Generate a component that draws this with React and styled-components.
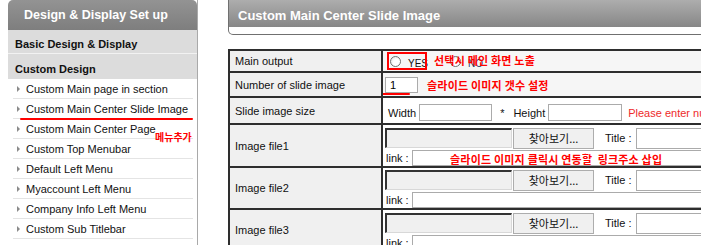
import React from 'react';
import styled, { createGlobalStyle } from 'styled-components';

const Global = createGlobalStyle`
  html, body { margin: 0; padding: 0; overflow: hidden; background: #fff; }
  body { font-family: "Liberation Sans", Arial, sans-serif; font-size: 11px; color: #111; }
`;

const KR = `"Noto Sans CJK KR", "Liberation Sans", sans-serif`;

const Page = styled.div`
  display: flex;
  align-items: flex-start;
  padding-left: 8px;
  width: 1000px;
`;

/* ---------- Sidebar ---------- */
const Sidebar = styled.aside`
  position: relative;
  flex: none;
  width: 190px;
  min-height: 260px;
  box-sizing: border-box;
  border-right: 1px solid #a9a9a9;
`;

const SideHeader = styled.div`
  height: 30px;
  box-sizing: border-box;
  padding-left: 16px;
  display: flex;
  align-items: center;
  border-radius: 5px 5px 0 0;
  background: linear-gradient(#939393, #7e7e7e);
  color: #fff;
  font-weight: bold;
  font-size: 12.5px;
`;

const Section = styled.div`
  height: ${p => p.$h}px;
  box-sizing: border-box;
  padding: 5px 0 0 7px;
  display: flex;
  align-items: center;
  background: #dcdcdc;
  font-weight: bold;
  font-size: 11px;
  color: #111;
  border-bottom: ${p => (p.$line ? '1px solid #f2f2f2' : 'none')};
`;

const Menu = styled.ul`
  list-style: none;
  margin: 0 4px 0 5px;
  padding: 0;
`;

const Item = styled.li`
  position: relative;
  height: 20px;
  box-sizing: border-box;
  border-bottom: 1px solid #e4e4e4;
  display: flex;
  align-items: center;
  padding-left: 4px;
  gap: 6px;
  font-size: 11px;
  color: #111;
  &::after {
    content: '';
    display: ${p => (p.$marked ? 'block' : 'none')};
    position: absolute;
    left: 7px;
    right: 0;
    bottom: -2px;
    height: 2px;
    border-radius: 1px;
    background: #f00;
  }
`;

const Arrow = styled.span`
  width: 0;
  height: 0;
  border-top: 3px solid transparent;
  border-bottom: 3px solid transparent;
  border-left: 3px solid #8a8a8a;
`;

const MenuNote = styled.span`
  position: absolute;
  left: 147px;
  top: 129px;
  color: #f00;
  font: bold 10px/16px ${KR};
`;

/* ---------- Main ---------- */
const Main = styled.main`
  flex: none;
  width: 640px;
  margin-left: 30px;
`;

const TitleBox = styled.div`
  box-sizing: border-box;
  height: 35px;
  border: 1px solid #707070;
  border-top: none;
  border-radius: 0 0 5px 5px;
  background: #fff;
  overflow: hidden;
`;

const TitleBar = styled.h1`
  margin: 0;
  height: 27px;
  box-sizing: border-box;
  padding: 3px 0 0 9px;
  display: flex;
  align-items: center;
  background: linear-gradient(#adadad, #878787);
  color: #fff;
  font: bold 13px "Liberation Sans", Arial, sans-serif;
`;

const FormGrid = styled.div`
  margin-top: 14px;
  display: grid;
  grid-template-columns: 151px 1fr;
  grid-template-rows: 20px 23px 25px 41px 40px 40px;
  gap: 2px;
  padding: 2px;
  background: #2e2e2e;
`;

const Label = styled.div`
  background: #f0f0f0;
  padding-left: 5px;
  display: flex;
  align-items: center;
  font-size: 11px;
  color: #111;
`;

const Value = styled.div`
  position: relative;
  overflow: hidden;
  background: ${p => (p.$shade ? '#f6f6f6' : '#fff')};
`;

const RadioRow = styled.div`
  display: flex;
  padding: 5px 0 0 7px;
`;

const Option = styled.label`
  display: flex;
  align-items: flex-start;
  gap: 7px;
  margin-right: ${p => p.$mr || 0}px;
  font-size: 10px;
  line-height: 12px;
  color: ${p => p.$color || '#111'};
`;

const Radio = styled.span`
  width: 11px;
  height: 11px;
  box-sizing: border-box;
  border-radius: 50%;
  border: 1px solid #707070;
  background: radial-gradient(circle at 65% 65%, #fff 40%, #dcdcdc 100%);
`;

const OptText = styled.span`
  margin-top: 2px;
`;

const RedBox = styled.span`
  position: absolute;
  left: 4px;
  top: 1px;
  width: 40px;
  height: 18px;
  box-sizing: border-box;
  border: 2px solid #f00;
`;

const Note = styled.span`
  position: absolute;
  left: ${p => p.$x}px;
  top: ${p => p.$y}px;
  white-space: pre;
  color: #f00;
  font: bold 11px/16px ${KR};
  letter-spacing: 0.2px;
`;

const Underline = styled.span`
  position: absolute;
  left: -1px;
  top: 20px;
  width: 28px;
  height: 2px;
  border-radius: 1px;
  background: #f00;
`;

const CountWrap = styled.div`
  padding: 4px 0 0 2px;
`;

const TextInput = styled.span`
  display: flex;
  align-items: center;
  flex: none;
  box-sizing: border-box;
  width: ${p => p.$w}px;
  height: ${p => p.$h || 17}px;
  padding-left: 4px;
  margin-left: ${p => p.$ml || 0}px;
  border: 1px solid #ababab;
  background: #fff;
  font-size: 11px;
  color: #000;
`;

const SizeRow = styled.div`
  display: flex;
  align-items: center;
  height: 100%;
  box-sizing: border-box;
  padding: 4px 0 0 5px;
  white-space: nowrap;
  font-size: 11px;
`;

const Txt = styled.span`
  flex: none;
  margin-left: ${p => p.$ml || 0}px;
  color: ${p => p.$color || '#111'};
`;

const FileCell = styled.div`
  display: flex;
  flex-direction: column;
  gap: 2px;
  padding: ${p => p.$pt}px 0 0 2px;
  white-space: nowrap;
`;

const FileLine = styled.div`
  display: flex;
  align-items: center;
  height: 20px;
`;

const FileBox = styled.span`
  flex: none;
  width: 127px;
  height: 20px;
  box-sizing: border-box;
  border-top: 2px solid #333;
  border-left: 2px solid #333;
  border-right: 1px solid #d8d8d8;
  border-bottom: 1px solid #d8d8d8;
  background: #f0f0f0;
`;

const Browse = styled.span`
  flex: none;
  width: 81px;
  height: 21px;
  margin-left: 1px;
  box-sizing: border-box;
  display: flex;
  align-items: center;
  justify-content: center;
  border: 1px solid #adadad;
  background: #f0f0f0;
  font: 11px ${KR};
  color: #111;
`;

const LinkLine = styled.div`
  display: flex;
  align-items: center;
  height: 16px;
  font-size: 11px;
  padding-left: 1px;
`;

const rows = [
  { label: 'Image file1', pt: 3, note: true },
  { label: 'Image file2', pt: 2 },
  { label: 'Image file3', pt: 3 },
];

const menu = [
  'Custom Main page in section',
  'Custom Main Center Slide Image',
  'Custom Main Center Page',
  'Custom Top Menubar',
  'Default Left Menu',
  'Myaccount Left Menu',
  'Company Info Left Menu',
  'Custom Sub Titlebar',
  'Shopping Cart Page',
];

export default function App() {
  return (
    <>
      <Global />
      <Page>
        <Sidebar>
          <SideHeader>Design &amp; Display Set up</SideHeader>
          <Section $h={24} $line>Basic Design &amp; Display</Section>
          <Section $h={25}>Custom Design</Section>
          <Menu>
            {menu.map((m, i) => (
              <Item key={m} $marked={i === 1}>
                <Arrow />
                {m}
              </Item>
            ))}
          </Menu>
          <MenuNote>메뉴추가</MenuNote>
        </Sidebar>

        <Main>
          <TitleBox>
            <TitleBar>Custom Main Center Slide Image</TitleBar>
          </TitleBox>

          <FormGrid>
            <Label>Main output</Label>
            <Value $shade>
              <RadioRow>
                <Option $mr={22}>
                  <Radio />
                  <OptText>YES</OptText>
                </Option>
                <Option $color="#17356a">
                  <Radio />
                  <OptText>NO</OptText>
                </Option>
              </RadioRow>
              <RedBox />
              <Note $x={51} $y={1}>선택시 메인 화면 노출</Note>
            </Value>

            <Label>Number of slide image</Label>
            <Value $shade>
              <CountWrap>
                <TextInput $w={33} $h={16}>1</TextInput>
              </CountWrap>
              <Underline />
              <Note $x={44} $y={4}>슬라이드 이미지 갯수 설정</Note>
            </Value>

            <Label>Slide image size</Label>
            <Value>
              <SizeRow>
                <Txt>Width</Txt>
                <TextInput $w={73} $ml={3} />
                <Txt $ml={8}>*</Txt>
                <Txt $ml={9}>Height</Txt>
                <TextInput $w={74} $ml={3} />
                <Txt $ml={6} $color="#ee2a2a">Please enter number only</Txt>
              </SizeRow>
            </Value>

            {rows.map(r => (
              <React.Fragment key={r.label}>
                <Label>{r.label}</Label>
                <Value>
                  <FileCell $pt={r.pt}>
                    <FileLine>
                      <FileBox />
                      <Browse>찾아보기...</Browse>
                      <Txt $ml={11}>Title :</Txt>
                      <TextInput $w={140} $h={21} $ml={4} />
                    </FileLine>
                    <LinkLine>
                      <Txt>link :</Txt>
                      <TextInput $w={330} $h={16} $ml={3} />
                    </LinkLine>
                  </FileCell>
                  {r.note && (
                    <Note $x={67} $y={26}>슬라이드 이미지 클릭시 연동할  링크주소 삽입</Note>
                  )}
                </Value>
              </React.Fragment>
            ))}
          </FormGrid>
        </Main>
      </Page>
    </>
  );
}
